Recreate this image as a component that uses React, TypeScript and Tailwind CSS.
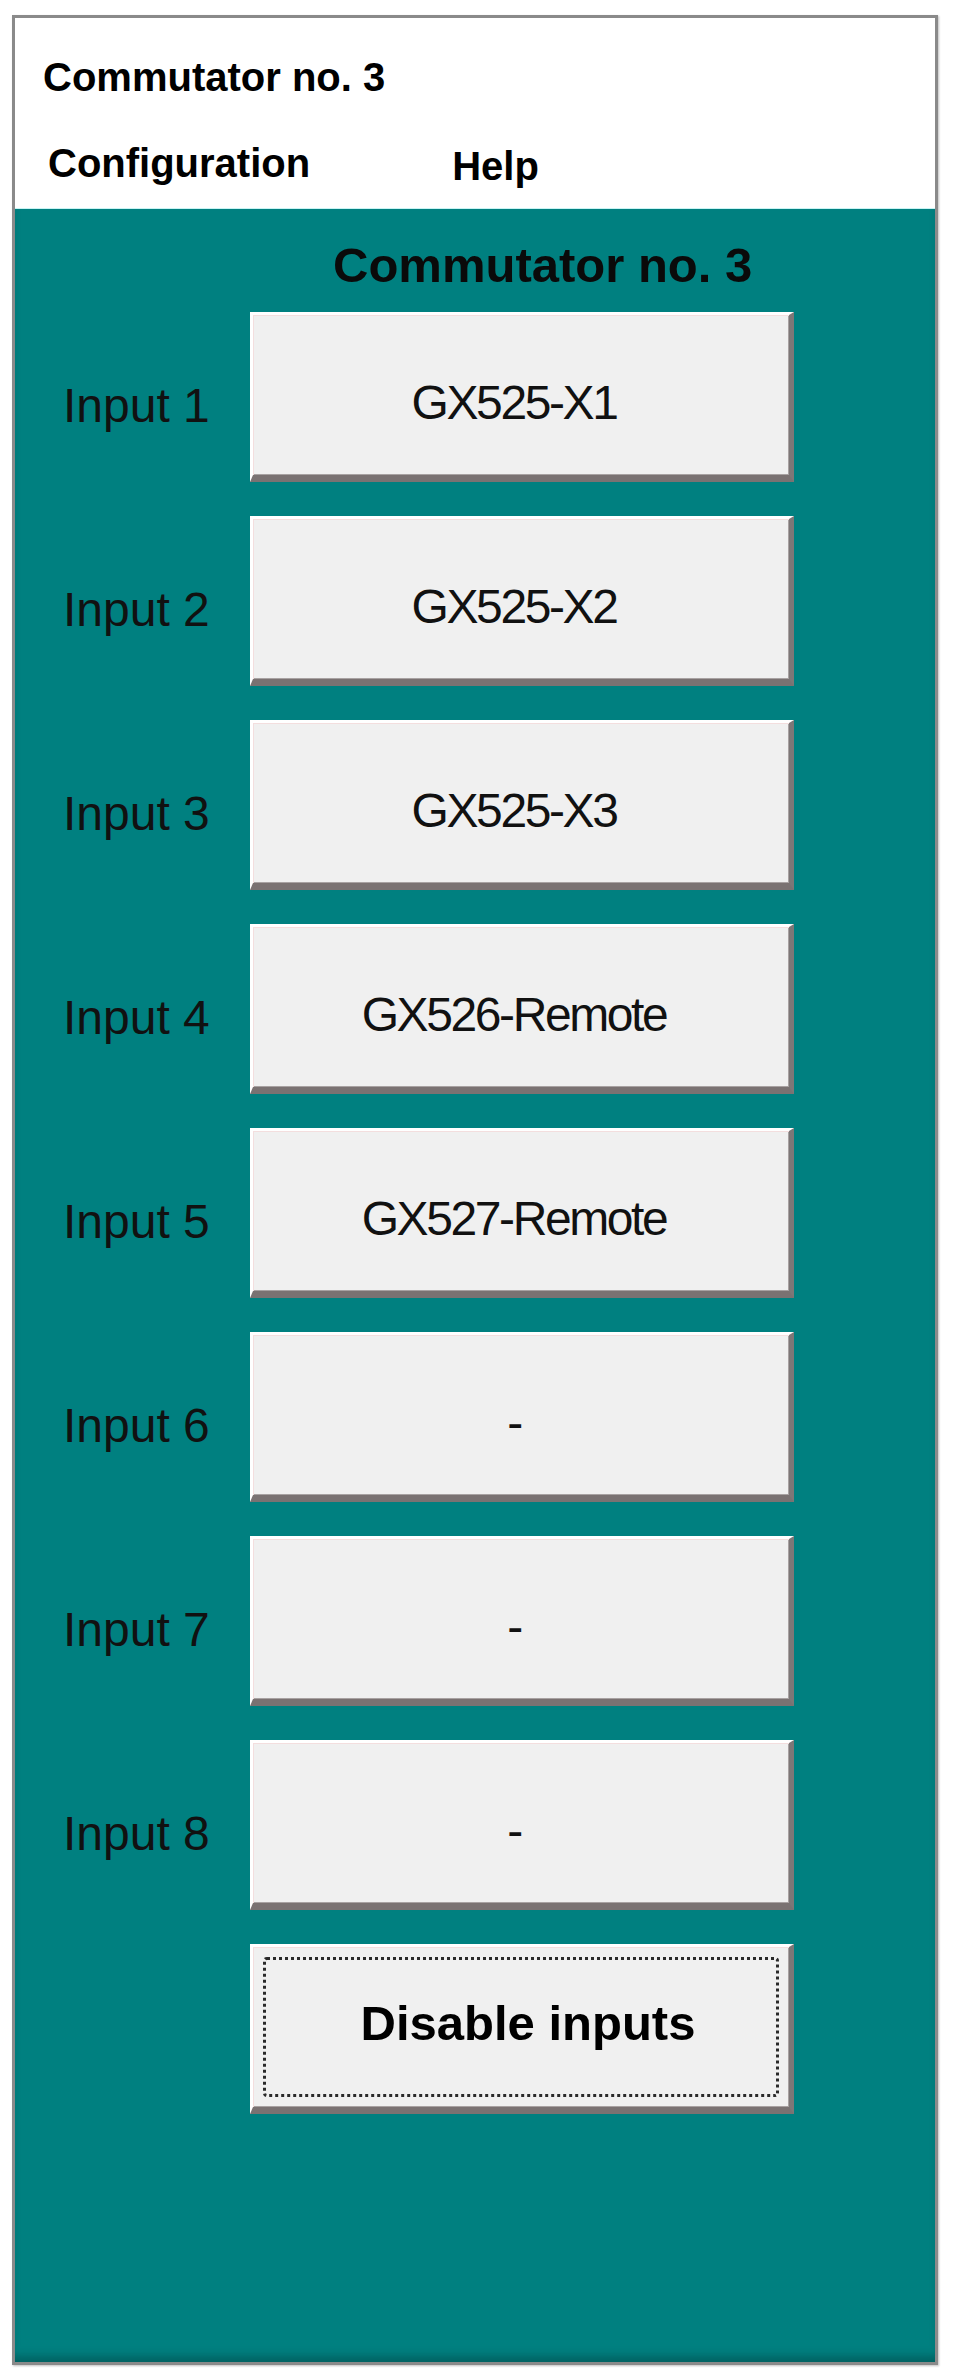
import React from 'react';

const inputs = [
  { label: 'Input 1', value: 'GX525-X1' },
  { label: 'Input 2', value: 'GX525-X2' },
  { label: 'Input 3', value: 'GX525-X3' },
  { label: 'Input 4', value: 'GX526-Remote' },
  { label: 'Input 5', value: 'GX527-Remote' },
  { label: 'Input 6', value: '-' },
  { label: 'Input 7', value: '-' },
  { label: 'Input 8', value: '-' },
];

// Classic 3D push button frame
const btnFrame =
  'w-[544px] h-[170px] bg-[#f0f0f0] border-t-[3px] border-l-[3px] border-t-white border-l-white border-b-[7px] border-r-[5px] border-b-[#7a7272] border-r-[#7d7777] shadow-[inset_1px_1px_0_#f3dede,inset_-1px_-1px_0_#a8a2a2] flex items-center justify-center';

export default function App() {
  return (
    <div className="min-h-screen bg-white pt-[15px] pl-[12px] font-['Liberation_Sans',Arial,sans-serif] text-black">
      <div className="w-[926px] h-[2350px] border-[3px] border-[#8a8a8a] shadow-[1px_1px_2px_rgba(0,0,0,0.25)] flex flex-col">
        {/* Title + menu */}
        <div className="h-[191px] bg-white flex flex-col pt-[39px] border-b border-b-[#c8f4f4]">
          <div className="pl-[28px] text-[40px] leading-none font-bold">Commutator no. 3</div>
          <div className="mt-[46px] pl-[33px] flex text-[40px] leading-none font-bold">
            <span>Configuration</span>
            <span className="ml-[142px] mt-[3px]">Help</span>
          </div>
        </div>

        {/* Panel */}
        <div className="flex-1 bg-[#008080] shadow-[inset_0_-10px_8px_-4px_rgba(0,40,40,0.35)] pl-[45px] pt-[32px]">
          <div className="pl-[273px] text-[49px] leading-none font-bold text-[#0a0a0a]">Commutator no. 3</div>

          <div className="mt-[22px] flex flex-col gap-[34px]">
            {inputs.map((inp) => (
              <div key={inp.label} className="flex items-center">
                <div className="w-[190px] pt-[18px] pl-[3px] text-[48px] leading-none text-[#111]">{inp.label}</div>
                <button className={btnFrame + ' pr-[14px]'}>
                  <span className="pt-[16px] text-[48px] leading-none tracking-[-0.05em] text-[#111]">{inp.value}</span>
                </button>
              </div>
            ))}

            <div className="flex items-center">
              <div className="w-[190px]" />
              <button className={btnFrame + ' p-[10px]'}>
                <span className="w-full h-full border-[3px] border-dotted border-[#2a2a2a] rounded-[4px] flex items-center justify-center pb-[8px] pl-[14px] text-[49px] leading-none font-bold">
                  Disable inputs
                </span>
              </button>
            </div>
          </div>
        </div>
      </div>
    </div>
  );
}
